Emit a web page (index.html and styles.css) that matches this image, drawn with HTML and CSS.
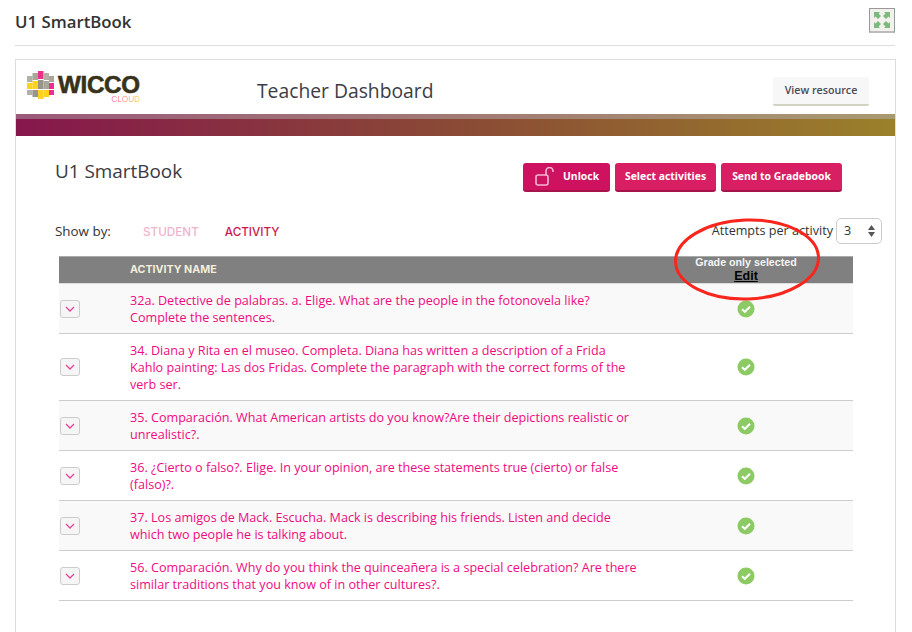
FILE: index.html
```html
<!DOCTYPE html>
<html lang="en">
<head>
<meta charset="utf-8">
<title>U1 SmartBook</title>
<link rel="stylesheet" href="styles.css">
</head>
<body>
<div class="page">
  <header class="topbar">
    <h1 class="page-title">U1 SmartBook</h1>
    <button class="expand" aria-label="Expand">
      <svg width="16" height="16" viewBox="0 0 16 16">
        <g fill="#7cb97c">
          <path d="M0 0h6L4.500 1.500 7 4 4 7 1.500 4.500 0 6z"/>
          <path d="M16 0h-6l1.500 1.500L9 4l3 3 2.500-2.500L16 6z"/>
          <path d="M0 16h6l-1.500-1.500L7 12 4 9l-2.500 2.500L0 10z"/>
          <path d="M16 16h-6l1.500-1.500L9 12l3-3 2.500 2.500L16 10z"/>
        </g>
      </svg>
    </button>
  </header>
  <section class="frame">
    <div class="brand-bar">
      <div class="logo">
        <svg class="logo-mark" width="28" height="29" viewBox="0 0 28 29">
          <rect x="0" y="5" width="5.500" height="6" fill="#b3b1a6"/>
          <rect x="5.500" y="2" width="5.500" height="7" fill="#a9a79c"/>
          <rect x="11" y="0" width="5.500" height="8" fill="#ee2f8c"/>
          <rect x="16.500" y="2" width="5.500" height="7" fill="#b3b1a6"/>
          <rect x="22" y="5" width="5" height="6" fill="#a9a79c"/>
          <rect x="0" y="12" width="5.500" height="6" fill="#ffd21f"/>
          <rect x="5.500" y="10" width="5.500" height="8" fill="#ffd21f"/>
          <rect x="11" y="9" width="5.500" height="9" fill="#98968b"/>
          <rect x="16.500" y="10" width="5.500" height="8" fill="#a9a79c"/>
          <rect x="22" y="12" width="5" height="6" fill="#ee2f8c"/>
          <rect x="0" y="19" width="5.500" height="5" fill="#b3b1a6"/>
          <rect x="5.500" y="19" width="5.500" height="7" fill="#98968b"/>
          <rect x="11" y="19" width="5.500" height="9" fill="#ffd21f"/>
          <rect x="16.500" y="19" width="5.500" height="7" fill="#ffd21f"/>
          <rect x="22" y="19" width="5" height="5" fill="#ee2f8c"/>
        </svg>
        <div class="logo-text">
          <span class="logo-word">WICCO</span>
          <span class="logo-sub">CLOUD</span>
        </div>
      </div>
      <h2 class="dash-title">Teacher Dashboard</h2>
      <button class="view-btn">View resource</button>
    </div>
    <div class="band"></div>
    <div class="content">
      <div class="title-row">
        <h3 class="set-title">U1 SmartBook</h3>
        <div class="actions">
          <button class="action action-unlock">
            <svg width="21" height="19" viewBox="0 0 21 19" fill="none" stroke="#f6b7d2" stroke-width="1.600">
              <rect x="1" y="8" width="12" height="10" rx="2"/>
              <path d="M11 8V4a3.500 3.500 0 0 1 7 0v1"/>
            </svg>
            <span>Unlock</span>
          </button>
          <button class="action action-select">Select activities</button>
          <button class="action action-send">Send to Gradebook</button>
        </div>
      </div>
      <div class="filter-row">
        <span class="show-label">Show by:</span>
        <span class="tab tab-off">STUDENT</span>
        <span class="tab tab-on">ACTIVITY</span>
        <div class="attempts">
          <span>Attempts per activity</span>
          <span class="stepper">3
            <svg width="7" height="12" viewBox="0 0 7 12" fill="#555"><path d="M3.500 0 7 5H0z"/><path d="M3.500 12 0 7h7z"/></svg>
          </span>
        </div>
      </div>
      <div class="table">
        <div class="thead">
          <div class="th-name">ACTIVITY NAME</div>
          <div class="th-grade">Grade only selected<br><a class="edit" href="#">Edit</a></div>
        </div>
        <div class="row r2 odd">
          <span class="toggle"><svg width="10" height="6" viewBox="0 0 10 6" fill="none" stroke="#e8439b" stroke-width="1.300"><path d="M1 1l4 4 4-4"/></svg></span>
          <p class="name">32a. Detective de palabras. a. Elige. What are the people in the fotonovela like? Complete the sentences.</p>
          <span class="check"><svg width="18" height="18" viewBox="0 0 18 18"><circle cx="9" cy="9" r="8.500" fill="#8ccb63"/><path d="M5 9.200l2.800 2.600L13 6.700" fill="none" stroke="#fff" stroke-width="2"/></svg></span>
        </div>
        <div class="row r3">
          <span class="toggle"><svg width="10" height="6" viewBox="0 0 10 6" fill="none" stroke="#e8439b" stroke-width="1.300"><path d="M1 1l4 4 4-4"/></svg></span>
          <p class="name">34. Diana y Rita en el museo. Completa. Diana has written a description of a Frida Kahlo painting: Las dos Fridas. Complete the paragraph with the correct forms of the verb ser.</p>
          <span class="check"><svg width="18" height="18" viewBox="0 0 18 18"><circle cx="9" cy="9" r="8.500" fill="#8ccb63"/><path d="M5 9.200l2.800 2.600L13 6.700" fill="none" stroke="#fff" stroke-width="2"/></svg></span>
        </div>
        <div class="row r2 odd">
          <span class="toggle"><svg width="10" height="6" viewBox="0 0 10 6" fill="none" stroke="#e8439b" stroke-width="1.300"><path d="M1 1l4 4 4-4"/></svg></span>
          <p class="name">35. Comparación. What American artists do you know?Are their depictions realistic or unrealistic?.</p>
          <span class="check"><svg width="18" height="18" viewBox="0 0 18 18"><circle cx="9" cy="9" r="8.500" fill="#8ccb63"/><path d="M5 9.200l2.800 2.600L13 6.700" fill="none" stroke="#fff" stroke-width="2"/></svg></span>
        </div>
        <div class="row r2">
          <span class="toggle"><svg width="10" height="6" viewBox="0 0 10 6" fill="none" stroke="#e8439b" stroke-width="1.300"><path d="M1 1l4 4 4-4"/></svg></span>
          <p class="name">36. ¿Cierto o falso?. Elige. In your opinion, are these statements true (cierto) or false (falso)?.</p>
          <span class="check"><svg width="18" height="18" viewBox="0 0 18 18"><circle cx="9" cy="9" r="8.500" fill="#8ccb63"/><path d="M5 9.200l2.800 2.600L13 6.700" fill="none" stroke="#fff" stroke-width="2"/></svg></span>
        </div>
        <div class="row r2 odd">
          <span class="toggle"><svg width="10" height="6" viewBox="0 0 10 6" fill="none" stroke="#e8439b" stroke-width="1.300"><path d="M1 1l4 4 4-4"/></svg></span>
          <p class="name">37. Los amigos de Mack. Escucha. Mack is describing his friends. Listen and decide which two people he is talking about.</p>
          <span class="check"><svg width="18" height="18" viewBox="0 0 18 18"><circle cx="9" cy="9" r="8.500" fill="#8ccb63"/><path d="M5 9.200l2.800 2.600L13 6.700" fill="none" stroke="#fff" stroke-width="2"/></svg></span>
        </div>
        <div class="row r2">
          <span class="toggle"><svg width="10" height="6" viewBox="0 0 10 6" fill="none" stroke="#e8439b" stroke-width="1.300"><path d="M1 1l4 4 4-4"/></svg></span>
          <p class="name">56. Comparación. Why do you think the quinceañera is a special celebration? Are there similar traditions that you know of in other cultures?.</p>
          <span class="check"><svg width="18" height="18" viewBox="0 0 18 18"><circle cx="9" cy="9" r="8.500" fill="#8ccb63"/><path d="M5 9.200l2.800 2.600L13 6.700" fill="none" stroke="#fff" stroke-width="2"/></svg></span>
        </div>
      </div>
    </div>
  </section>
  <svg class="oval" width="152" height="88" viewBox="0 0 152 88">
    <ellipse cx="76" cy="43.500" rx="71.500" ry="39.500" fill="none" stroke="#f8261c" stroke-width="3" transform="rotate(-2 76 43.500)"/>
  </svg>
</div>
</body>
</html>
```
FILE: styles.css
```css
* { box-sizing: border-box; }
html, body { margin: 0; padding: 0; background: #fff; overflow: hidden; }
body { width: 912px; height: 632px; font-family: "Open Sans", sans-serif; color: #333; }
.page { position: relative; height: 632px; padding: 0 16px 0 15px; overflow: hidden; }
.topbar { height: 46px; display: flex; justify-content: space-between; align-items: flex-start; border-bottom: 1px solid #ddd; margin-right: 1px; }
.page-title { margin: 11px 0 0; font-size: 16.800px; line-height: 22px; font-weight: 600; color: #333; }
.expand { width: 26px; height: 25px; margin-top: 8px; padding: 0; display: flex; align-items: center; justify-content: center; background: #f1f2ee; border: 1px solid #999; border-bottom: 2px solid #bbb; }
.frame { margin-top: 13px; height: 600px; border: 1px solid #ddd; border-bottom: 0; }
.brand-bar { height: 54px; display: flex; align-items: flex-start; position: relative; }
.logo { margin: 11px 0 0 11px; width: 230px; display: flex; align-items: flex-start; gap: 3px; }
.logo-text { position: relative; width: 90px; height: 34px; }
.logo-word { display: block; font-family: "Liberation Sans", sans-serif; font-weight: 700; font-size: 24.200px; line-height: 20px; letter-spacing: -0.300px; color: #38321a; -webkit-text-stroke: 0.600px #38321a; margin-top: 4px; }
.logo-sub { position: absolute; right: 8px; top: 24px; font-family: "Liberation Sans", sans-serif; font-size: 8.200px; line-height: 10px; background: linear-gradient(90deg, #ff69ac, #ffd53f); -webkit-background-clip: text; background-clip: text; color: transparent; }
.dash-title { margin: 17px 0 0; font-size: 19.300px; line-height: 27px; font-weight: 400; color: #3c3c46; flex: 1; }
.view-btn { margin: 17px 26px 0 0; width: 96px; height: 29px; padding: 0; font: 600 10.700px/1 "Open Sans", sans-serif; color: #4a4a55; background: #f7f7f7; border: 0; border-bottom: 2px solid #d2d3c2; border-radius: 2px; }
.band { height: 22px; border-top: 5px solid rgba(255, 255, 255, 0.25); background: linear-gradient(90deg, #86174c 0%, #8a4a35 50%, #9b812b 100%); background-clip: border-box; position: relative; }
.band::before { content: ""; display: block; margin-top: -5px; height: 5px; background: linear-gradient(90deg, #9a5a7a, #a89a70); }
.content { padding: 0 43px 0 43px; }
.title-row { height: 56px; display: flex; justify-content: space-between; align-items: flex-start; margin-right: 10px; margin-left: -4px; padding-left: 0; }
.set-title { margin: 22px 0 0; font-size: 18.900px; line-height: 26px; font-weight: 400; color: #3a3a42; }
.actions { display: flex; gap: 5px; margin-top: 27px; }
.action { height: 29px; padding: 0; display: flex; align-items: center; justify-content: center; font: 700 10.400px/1 "Open Sans", sans-serif; color: #fff; background: #d81f64; border: 0; border-bottom: 2px solid #a5154b; border-radius: 3px; white-space: nowrap; }
.action-unlock { width: 87px; padding: 0 0 0 12px; gap: 7px; justify-content: flex-start; background: #cf1260; }
.action-select { width: 101px; }
.action-send { width: 121px; }
.filter-row { height: 64px; display: flex; align-items: flex-start; margin-left: -4px; padding-top: 30px; position: relative; font-size: 12.600px; line-height: 20px; }
.show-label { width: 88px; margin-top: -1px; font-size: 13.400px; color: #333; }
.tab { font-family: "Inter", sans-serif; font-size: 11.700px; font-weight: 500; margin-right: 26px; }
.tab-off { color: #efb4ca; }
.tab-on { color: #c9174f; }
.attempts { position: absolute; top: 26px; right: -30px; display: flex; align-items: center; gap: 3px; color: #333; }
.stepper { width: 46px; height: 26px; padding: 0 6px 0 7px; display: flex; align-items: center; justify-content: space-between; border: 1px solid #ccc; border-radius: 5px; background: #fff; }
.table { width: 794px; }
.thead { height: 28px; display: flex; align-items: stretch; background: #808080; border-top: 1px solid #aaa; border-bottom: 1px solid #ddd; }
.th-name { margin-left: 71px; width: 546px; font-family: "Inter", sans-serif; font-weight: 700; font-size: 10.700px; line-height: 25px; color: #f2eed8; }
.th-grade { width: 140px; margin-top: -2px; text-align: center; font-family: "Liberation Sans", sans-serif; font-weight: 700; font-size: 10.700px; line-height: 14px; color: #f4f4f4; }
.edit { font-size: 12.500px; color: #000; text-decoration: underline; }
.row { display: flex; align-items: center; border-bottom: 1px solid #ccc; }
.odd { background: #f9f9f9; }
.r2 { height: 50px; }
.r3 { height: 67px; }
.toggle { width: 20px; height: 18px; margin-left: 1px; display: flex; align-items: center; justify-content: center; background: #f5f5f5; border: 1px solid #ccc; border-radius: 3px; }
.name { margin: 0 0 0 50px; width: 509px; font-size: 12.600px; line-height: 17px; color: #f00a80; }
.check { margin-left: 98px; display: flex; }
.oval { position: absolute; left: 671px; top: 216px; }
```
